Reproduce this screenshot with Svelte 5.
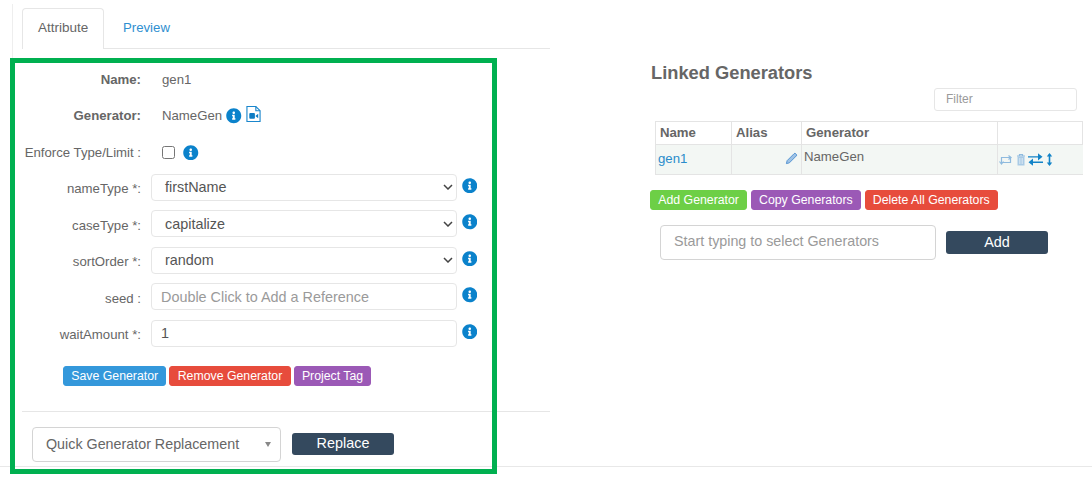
<script>
  const rows = [
    { label: 'nameType *:', type: 'select', value: 'firstName' },
    { label: 'caseType *:', type: 'select', value: 'capitalize' },
    { label: 'sortOrder *:', type: 'select', value: 'random' },
    { label: 'seed :', type: 'ref', value: '' },
    { label: 'waitAmount *:', type: 'num', value: '1' }
  ];
  const info = 'M256 8C119.043 8 8 119.083 8 256c0 136.997 111.043 248 248 248s248-111.003 248-248C504 119.083 392.957 8 256 8zm0 110c23.196 0 42 18.804 42 42s-18.804 42-42 42-42-18.804-42-42 18.804-42 42-42zm56 254c0 6.627-5.373 12-12 12h-88c-6.627 0-12-5.373-12-12v-24c0-6.627 5.373-12 12-12h12v-64h-12c-6.627 0-12-5.373-12-12v-24c0-6.627 5.373-12 12-12h64c6.627 0 12 5.373 12 12v100h12c6.627 0 12 5.373 12 12v24z';
</script>

{#snippet infoIcon()}
  <svg class="info" viewBox="0 0 512 512" aria-hidden="true"><path d={info} /></svg>
{/snippet}

<div class="page">
  <div class="content">
    <section class="left">
      <nav class="tabs">
        <span class="tab active">Attribute</span>
        <span class="tab">Preview</span>
      </nav>

      <div class="form">
        <div class="row static">
          <span class="label strong">Name:</span>
          <span class="value">gen1</span>
        </div>
        <div class="row static">
          <span class="label strong">Generator:</span>
          <span class="value">NameGen</span>
          {@render infoIcon()}
          <svg class="file" viewBox="0 0 16 18" aria-hidden="true">
            <path d="M1 1h9.500L15 5.500V17H1z" fill="#fff" stroke="#1a86cc" stroke-width="1.200" />
            <path d="M10.500 1v4.500H15" fill="none" stroke="#1a86cc" stroke-width="1.200" />
            <rect x="3.500" y="8" width="6" height="6" rx="1" fill="#0d7cc4" />
            <path d="M10 11l3-2.400v5L10 11z" fill="#0d7cc4" />
          </svg>
        </div>
        <div class="row static">
          <span class="label">Enforce Type/Limit :</span>
          <span class="check"></span>
          {@render infoIcon()}
        </div>

        {#each rows as r}
          <div class="row field">
            <span class="label">{r.label}</span>
            <div class="control" class:plain={r.type !== 'select'}>
              {#if r.type === 'ref'}
                <span class="placeholder">Double Click to Add a Reference</span>
              {:else}
                <span class="ctext">{r.value}</span>
              {/if}
              {#if r.type === 'select'}
                <svg class="chev" viewBox="0 0 10 6" aria-hidden="true"><path d="M1 1l4 4 4-4" fill="none" stroke="#444" stroke-width="1.500" /></svg>
              {/if}
            </div>
            {@render infoIcon()}
          </div>
        {/each}

        <div class="actions">
          <button class="btn blue">Save Generator</button>
          <button class="btn red">Remove Generator</button>
          <button class="btn purple">Project Tag</button>
        </div>
      </div>

      <div class="replace">
        <div class="quick">
          <span>Quick Generator Replacement</span>
          <i class="caret"></i>
        </div>
        <button class="dark replace-btn">Replace</button>
      </div>
    </section>

    <section class="right">
      <h2>Linked Generators</h2>
      <div class="filter-wrap"><div class="filter">Filter</div></div>

      <div class="table">
        <div class="cell head c1">Name</div>
        <div class="cell head c2">Alias</div>
        <div class="cell head c3">Generator</div>
        <div class="cell head c4"></div>
        <div class="cell body c1"><span class="link">gen1</span></div>
        <div class="cell body c2 alias">
          <svg class="pencil" viewBox="0 0 14 14" aria-hidden="true">
            <path d="M1.500 12.500l.8-3.200 7.400-7.400a1.300 1.300 0 0 1 1.900 0l.5.5a1.300 1.300 0 0 1 0 1.900l-7.400 7.400z" fill="#9fc3e6" stroke="#4d8fcf" stroke-width="1" />
          </svg>
        </div>
        <div class="cell body c3 gen">NameGen</div>
        <div class="cell body c4 tools">
          <svg class="t1" viewBox="0 0 14 12" aria-hidden="true">
            <path d="M2.500 9V3.500h9M11.500 3v5.500h-9" fill="none" stroke="#8fbbdf" stroke-width="1.200" />
            <path d="M.5 7.500L2.500 10l2-2.500M9.500 1.500l2.500 2-2.500 2" fill="none" stroke="#8fbbdf" stroke-width="1.200" />
          </svg>
          <svg class="t2" viewBox="0 0 10 13" aria-hidden="true">
            <path d="M1 3h8M3.500 3V1.500h3V3" fill="none" stroke="#8fbbdf" stroke-width="1.200" />
            <path d="M1.500 3.500h7V12.500h-7z" fill="#a9cbe6" />
            <path d="M3.500 5v6M5 5v6M6.500 5v6" stroke="#e5eff5" stroke-width=".6" />
          </svg>
          <svg class="t3" viewBox="0 0 14 12" aria-hidden="true">
            <path d="M0 3.500h11M10 1.500l2.500 2-2.500 2z" fill="#1283c8" stroke="#1283c8" stroke-width="1.300" />
            <path d="M14 8.500H3M4 6.500l-2.500 2 2.500 2z" fill="#1283c8" stroke="#1283c8" stroke-width="1.300" />
          </svg>
          <svg class="t4" viewBox="0 0 7 14" aria-hidden="true">
            <path d="M3.500 2v10" stroke="#1283c8" stroke-width="1.600" />
            <path d="M.8 4l2.700-3.500L6.200 4zM.8 10l2.700 3.500L6.200 10z" fill="#1283c8" />
          </svg>
        </div>
      </div>

      <div class="table-actions">
        <button class="btn green">Add Generator</button>
        <button class="btn purple">Copy Generators</button>
        <button class="btn red">Delete All Generators</button>
      </div>

      <div class="typeahead-row">
        <div class="typeahead">Start typing to select Generators</div>
        <button class="dark add-btn">Add</button>
      </div>
    </section>
  </div>

  <div class="highlight"></div>
</div>

<style>
  :global(body) {
    margin: 0;
    background: #fff;
  }

  .page {
    position: relative;
    width: 1092px;
    height: 482px;
    font-family: "Liberation Sans", Arial, sans-serif;
    font-size: 13.200px;
    color: #666;
  }

  .content {
    display: flex;
    box-sizing: border-box;
    height: 467px;
    border-bottom: 1px solid #e8e8e8;
  }

  .left {
    box-sizing: border-box;
    width: 538px;
    flex: none;
    margin: 4px 0 0 12px;
    padding: 4px 0 0 9px;
    border-left: 1px solid #eee;
  }

  .tabs {
    display: flex;
    height: 41px;
    box-sizing: border-box;
    border-bottom: 1px solid #e6e6e6;
  }

  .tab {
    box-sizing: border-box;
    height: 41px;
    padding: 12px 16px 0 19px;
    color: #2f8fd0;
    line-height: 16px;
  }

  .tab.active {
    width: 82px;
    padding: 11px 0 0 15px;
    color: #666;
    font-size: 13.500px;
    background: #fff;
    border: 1px solid #e6e6e6;
    border-bottom: 0;
    border-radius: 4px 4px 0 0;
  }

  .form {
    padding-top: 12px;
  }

  .row {
    display: flex;
    align-items: center;
    height: 36.500px;
  }

  .label {
    width: 119px;
    flex: none;
    text-align: right;
    white-space: nowrap;
  }

  .label.strong {
    font-weight: 700;
  }

  .static .value {
    margin-left: 21px;
  }

  .value + .info {
    margin-left: 4px;
  }

  .check {
    box-sizing: border-box;
    width: 13px;
    height: 13px;
    margin-left: 21px;
    border: 1px solid #767676;
    border-radius: 2.500px;
    background: #fff;
  }

  .check + .info {
    margin-left: 8px;
  }

  .info {
    width: 15.500px;
    height: 15.500px;
    flex: none;
    fill: #0b82cb;
  }

  .file {
    width: 15px;
    height: 18px;
    margin-left: 4px;
    margin-top: -3px;
  }

  .control {
    box-sizing: border-box;
    display: flex;
    align-items: center;
    justify-content: space-between;
    width: 306px;
    height: 27px;
    margin: -3px 0 0 10px;
    padding: 0 3px 0 13px;
    background: #fff;
    border: 1px solid #e6e6e6;
    border-radius: 4px;
    color: #555;
    font-size: 14.400px;
  }

  .control.plain {
    padding-left: 9px;
  }

  .field .info {
    margin: -6.500px 0 0 4.500px;
  }

  .placeholder {
    color: #9a9a9a;
  }

  .chev {
    width: 10px;
    height: 6px;
  }

  .actions {
    display: flex;
    gap: 3px;
    margin: 13px 0 0 41px;
  }

  .btn {
    box-sizing: border-box;
    height: 20px;
    padding: 0 7.300px;
    border: 1px solid transparent;
    border-radius: 3px;
    color: #fff;
    font: 12.300px/18px "Liberation Sans", Arial, sans-serif;
    white-space: nowrap;
  }

  .blue { background: #3498db; border-color: #3498db; }
  .red { background: #e74c3c; border-color: #e74c3c; }
  .purple { background: #9b59b6; border-color: #9b59b6; }
  .green { background: #6dcf46; border-color: #6dcf46; }

  .replace {
    display: flex;
    align-items: center;
    gap: 11px;
    box-sizing: border-box;
    height: 55px;
    margin-top: 25px;
    padding: 11px 0 0 10px;
    border-top: 1px solid #e6e6e6;
  }

  .quick {
    box-sizing: border-box;
    display: flex;
    align-items: center;
    justify-content: space-between;
    width: 249px;
    height: 35px;
    padding: 0 9px 1px 13px;
    border: 1px solid #d4d4d4;
    border-radius: 4px;
    background: #fff;
    color: #666;
    font-size: 14.300px;
  }

  .caret {
    width: 0;
    height: 0;
    border-left: 3.500px solid transparent;
    border-right: 3.500px solid transparent;
    border-top: 5px solid #888;
  }

  .dark {
    box-sizing: border-box;
    height: 22px;
    padding: 0 0 1px;
    border: 0;
    border-radius: 3px;
    background: #34495e;
    color: #fff;
    font: 14.400px/20px "Liberation Sans", Arial, sans-serif;
  }

  .replace-btn {
    width: 102px;
    margin-top: -2px;
  }

  .right {
    box-sizing: border-box;
    flex: 1;
    padding: 62px 0 0 100px;
  }

  h2 {
    margin: 0 0 0 1px;
    height: 22px;
    font-size: 18.300px;
    line-height: 21px;
    font-weight: 700;
    color: #666;
  }

  .filter-wrap {
    display: flex;
    justify-content: flex-end;
    padding: 4px 15px 0 0;
  }

  .filter {
    box-sizing: border-box;
    width: 143px;
    height: 23px;
    padding-left: 11px;
    border: 1px solid #e6e6e6;
    border-radius: 3px;
    color: #9a9a9a;
    font-size: 12px;
    line-height: 21px;
  }

  .table {
    display: grid;
    box-sizing: border-box;
    grid-template-columns: 75px 70px 196px 86px;
    grid-template-rows: 23px 29px;
    width: 428px;
    margin: 10px 0 0 5px;
    border: 1px solid #e4e4e4;
  }

  .cell {
    box-sizing: border-box;
    border-left: 1px solid #e4e4e4;
    padding-left: 4px;
  }

  .cell.c1 {
    border-left: 0;
  }

  .head {
    border-bottom: 1px solid #e4e4e4;
    font-weight: 700;
    line-height: 22px;
  }

  .body {
    background: #f3f7f4;
    display: flex;
    align-items: center;
  }

  .c1.body {
    padding: 0 0 2px 2px;
  }

  .link {
    color: #2a8ccb;
  }

  .alias {
    justify-content: flex-end;
    padding-right: 3px;
  }

  .pencil {
    width: 13px;
    height: 13px;
    margin-top: -2px;
  }

  .gen {
    padding: 0 0 6px 2px;
  }

  .tools {
    gap: 2.500px;
    padding: 0 0 0 1px;
  }

  .t1 { width: 14px; height: 12px; }
  .t2 { width: 10px; height: 13px; }
  .t3 { width: 15px; height: 13px; }
  .t4 { width: 7px; height: 15px; }

  .table-actions {
    display: flex;
    gap: 3.500px;
    margin-top: 15px;
  }

  .typeahead-row {
    display: flex;
    align-items: center;
    gap: 10px;
    margin: 15px 0 0 10px;
  }

  .typeahead {
    box-sizing: border-box;
    width: 276px;
    height: 35px;
    padding-left: 13px;
    border: 1px solid #d4d4d4;
    border-radius: 4px;
    color: #9a9a9a;
    font-size: 14.300px;
    line-height: 31px;
  }

  .add-btn {
    width: 102px;
    height: 23px;
  }

  .highlight {
    position: absolute;
    left: 10px;
    top: 58px;
    width: 487px;
    height: 416px;
    box-sizing: border-box;
    border: 5px solid #00b050;
    pointer-events: none;
  }
</style>
